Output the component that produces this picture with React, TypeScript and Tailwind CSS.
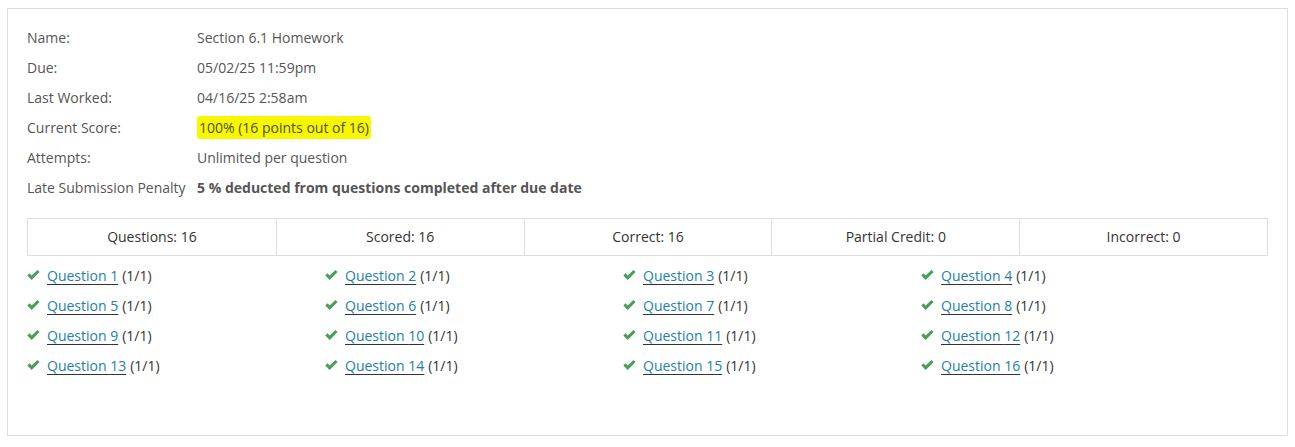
import React from "react";

const info: { label: string; value: React.ReactNode }[] = [
  { label: "Name:", value: "Section 6.1 Homework" },
  { label: "Due:", value: "05/02/25 11:59pm" },
  { label: "Last Worked:", value: "04/16/25 2:58am" },
  {
    label: "Current Score:",
    value: (
      <span className="bg-[#f7f700] px-[2px] py-[2px] rounded-[3px] text-[#4f4f2a]">
        100% (16 points out of 16)
      </span>
    ),
  },
  { label: "Attempts:", value: "Unlimited per question" },
  {
    label: "Late Submission Penalty",
    value: <span className="font-bold">5 % deducted from questions completed after due date</span>,
  },
];

const stats = ["Questions: 16", "Scored: 16", "Correct: 16", "Partial Credit: 0", "Incorrect: 0"];

function Check() {
  return (
    <svg viewBox="0 0 13 12" className="w-[13px] h-[12px] shrink-0" aria-hidden>
      <path d="M0.3 6.4 L2.4 4.3 L4.7 6.6 L10.4 0.9 L12.6 3.0 L4.7 11.0 Z" fill="#4a9e5a" />
    </svg>
  );
}

export default function App() {
  return (
    <div className="bg-white w-[1295px] h-[447px] pt-[8px] pl-[7px] font-['Open_Sans',sans-serif] text-[14px] text-[#555]">
      <div className="w-[1281px] h-[428px] border border-[#dedede] px-[19px] pt-[13px]">
        <div className="flex flex-col">
          {info.map((r) => (
            <div key={r.label} className="flex h-[30px] items-center">
              <div className="w-[170px]">{r.label}</div>
              <div>{r.value}</div>
            </div>
          ))}
        </div>

        <div className="mt-[16px] grid grid-cols-5 border border-[#dedede] h-[38px] text-[#333]">
          {stats.map((s, i) => (
            <div
              key={s}
              className={`flex items-center justify-center pb-[2px] ${i > 0 ? "border-l border-[#dedede]" : ""}`}
            >
              {s}
            </div>
          ))}
        </div>

        <div className="mt-[4px] grid grid-cols-[repeat(4,298px)] text-[#333]">
          {Array.from({ length: 16 }, (_, i) => i + 1).map((n) => (
            <div key={n} className="flex h-[30px] items-center">
              <Check />
              <a
                href="#"
                className="ml-[7px] text-[#1b80aa] underline decoration-[#333] underline-offset-[3px]"
              >
                Question {n}
              </a>
              <span className="ml-[4px]">(1/1)</span>
            </div>
          ))}
        </div>
      </div>
    </div>
  );
}
